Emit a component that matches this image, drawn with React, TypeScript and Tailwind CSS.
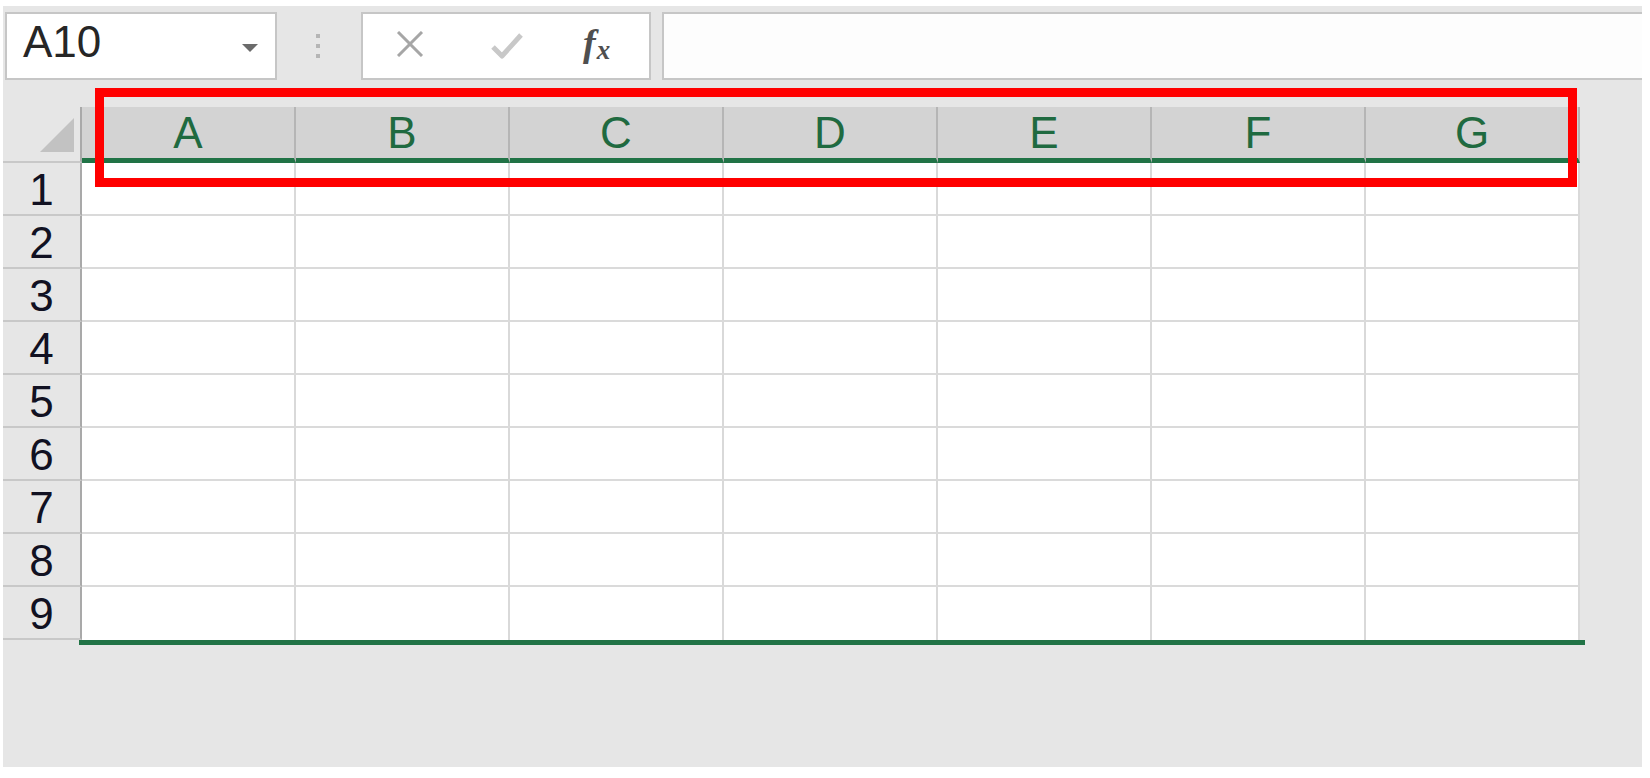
const COLS = ['A', 'B', 'C', 'D', 'E', 'F', 'G'];
const ROWS = [1, 2, 3, 4, 5, 6, 7, 8, 9];

function Toolbar() {
  return (
    <div className="flex h-[68px] items-stretch">
      {/* name box */}
      <div className="ml-[2px] flex w-[272px] items-center justify-between border-2 border-[#c6c6c6] bg-white pb-[9px] pl-[16px] pr-[17px]">
        <span className="text-[44px] leading-none text-[#262626]">A10</span>
        <svg width="16" height="8" viewBox="0 0 16 8" className="mt-[12px]">
          <polygon points="0,0 16,0 8,8" fill="#6b6b6b" />
        </svg>
      </div>
      <div className="ml-[39px] flex w-[4px] flex-col items-center justify-center gap-[6px]">
        <div className="h-[4px] w-[4px] bg-[#b5b5b5]" />
        <div className="h-[4px] w-[4px] bg-[#b5b5b5]" />
        <div className="h-[4px] w-[4px] bg-[#b5b5b5]" />
      </div>
      {/* cancel / enter / fx */}
      <div className="ml-[41px] flex w-[290px] items-center border-2 border-[#c6c6c6] bg-white pl-[32px]">
        <svg width="30" height="26" viewBox="0 0 30 26" className="mt-[-4px]">
          <line x1="3" y1="1" x2="27" y2="25" stroke="#a6a6a6" strokeWidth="3" />
          <line x1="27" y1="1" x2="3" y2="25" stroke="#a6a6a6" strokeWidth="3" />
        </svg>
        <svg width="33" height="28" viewBox="0 0 33 28" className="ml-[65px]">
          <polyline points="3,15 12,24 31,3" fill="none" stroke="#c8c8c8" strokeWidth="5" strokeLinejoin="round" />
        </svg>
        <span className="ml-[60px] mt-[-6px] flex items-baseline font-['Liberation_Serif',serif] font-bold italic leading-none text-[#4f4f4f]">
          <span className="text-[38px]">f</span>
          <span className="ml-[1px] translate-y-[3px] text-[27px]">x</span>
        </span>
      </div>
      {/* formula bar */}
      <div className="ml-[11px] flex-1 border-2 border-r-0 border-[#c6c6c6] bg-[#fdfdfd]" />
    </div>
  );
}

function Sheet() {
  return (
    <div className="mt-[27px]">
      <div className="grid grid-cols-[79px_repeat(7,214px)]">
        {/* select-all corner */}
        <div className="relative h-[56px] border-b-2 border-r-2 border-b-[#c8c8c8] border-r-[#a9a9a9]">
          <svg width="34" height="34" viewBox="0 0 34 34" className="absolute left-[37px] top-[11px]">
            <polygon points="34,0 34,34 0,34" fill="#c2c2c2" />
          </svg>
        </div>
        {COLS.map((c) => (
          <div
            key={c}
            className="flex h-[56px] items-center justify-center border-b-[5px] border-r-2 border-b-[#217346] border-r-[#b5b5b5] bg-[#d3d3d3] pt-[1px] text-[44px] leading-none text-[#1f6a40]"
          >
            {c}
          </div>
        ))}
        {ROWS.map((r) => (
          <div key={r} className="contents">
            <div className="flex h-[53px] items-center justify-center border-b-2 border-r-2 border-b-[#c8c8c8] border-r-[#a9a9a9] pt-[2px] text-[44px] leading-none text-[#111122]">
              {r}
            </div>
            {COLS.map((c) => (
              <div
                key={c}
                className={`h-[53px] border-r-2 border-r-[#d9d9d9] bg-white ${r < 9 ? 'border-b-2 border-b-[#dadada]' : ''}`}
              />
            ))}
          </div>
        ))}
      </div>
      <div className="ml-[76px] h-[5px] w-[1506px] bg-[#217346]" />
    </div>
  );
}

export default function App() {
  return (
    <div className="relative h-[778px] w-[1650px] overflow-hidden bg-white">
      <div className="ml-[3px] mt-[6px] h-[761px] w-[1639px] bg-[#e6e6e6] pt-[6px] font-['Liberation_Sans',Arial,sans-serif]">
        <Toolbar />
        <Sheet />
      </div>
      {/* annotation */}
      <div className="absolute left-[95px] top-[88px] h-[99px] w-[1482px] border-[9px] border-[#ff0000]" />
    </div>
  );
}
